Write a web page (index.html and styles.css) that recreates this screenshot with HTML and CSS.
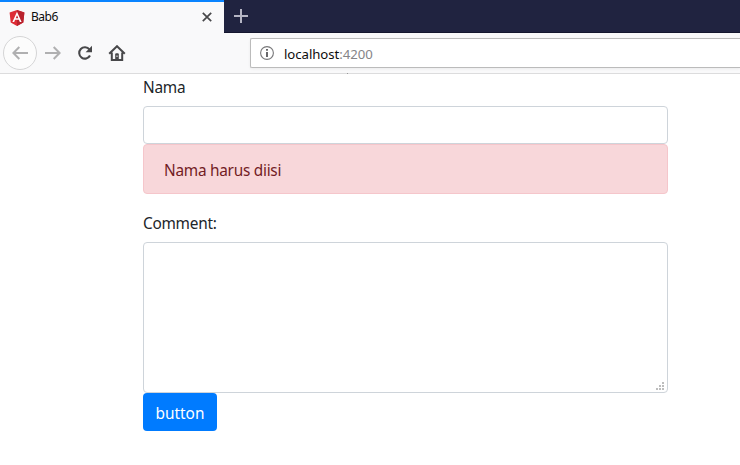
FILE: index.html
```html
<!DOCTYPE html>
<html lang="id">
<head>
<meta charset="utf-8">
<title>Bab6</title>
<link rel="stylesheet" href="styles.css">
</head>
<body>
<header class="browser">
  <div class="tabs">
    <div class="tab">
      <svg class="logo" width="16" height="16" viewBox="0 0 16 16"><path fill="#dd2c35" d="M8 0 15.4 2.6 14.3 12.4 8 16 1.7 12.4.6 2.6z"/><path fill="#b9222d" d="M8 0 15.4 2.6 14.3 12.4 8 16z"/><path fill="#fff" fill-rule="evenodd" d="M8 1.8 3.4 12h1.8l.9-2.3h3.8l.9 2.3h1.8zm0 3.4 1.3 3H6.7z"/></svg>
      <span class="tab-title">Bab6</span>
      <svg class="close" width="10" height="10" viewBox="0 0 10 10"><path d="M.8.8l8.4 8.4M9.2.8.8 9.2" stroke="#48484a" stroke-width="1.7"/></svg>
    </div>
    <svg class="plus" width="14" height="14" viewBox="0 0 14 14"><path d="M7 0v14M0 7h14" stroke="#b5b5c4" stroke-width="2"/></svg>
  </div>
  <div class="toolbar">
    <span class="back"><svg width="16" height="14" viewBox="0 0 16 14"><path d="M7.3 1 1.4 7l5.9 6M1.5 7H16" fill="none" stroke="#b0b0b1" stroke-width="2"/></svg></span>
    <svg class="forward" width="16" height="14" viewBox="0 0 16 14"><path d="M8.7 1l5.9 6-5.9 6M0 7h14.5" fill="none" stroke="#b0b0b1" stroke-width="2"/></svg>
    <svg class="reload" width="16" height="16" viewBox="0 0 16 16"><path d="M12.4 4.4A5.7 5.7 0 1 0 13 10.5" fill="none" stroke="#48484a" stroke-width="2.1"/><path d="M15 .8V7.3H8.6z" fill="#48484a"/></svg>
    <svg class="home" width="18" height="16" viewBox="0 0 18 16"><path d="M1.2 8.7 9 1.2l7.8 7.5M3.8 7.5V15h10.4V7.5" fill="none" stroke="#48484a" stroke-width="2"/><path d="M7.2 15V9.2q0-1 1-1h1.6q1 0 1 1V15z" fill="#48484a"/><path d="M9 10.5v1.5" stroke="#f9f9fa" stroke-width="1"/></svg>
    <div class="address">
      <svg width="14" height="14" viewBox="0 0 14 14"><circle cx="7" cy="7" r="6.4" fill="none" stroke="#78787a" stroke-width="1.1"/><path d="M7 3v1.8M7 6v5" stroke="#58585b" stroke-width="1.8"/></svg>
      <span class="url">localhost<span class="port">:4200</span></span>
    </div>
  </div>
</header>
<main class="container">
  <label class="label" for="nama">Nama</label>
  <input class="control" id="nama" type="text">
  <div class="alert"><span class="alert-text">Nama harus diisi</span></div>
  <label class="label" for="comment">Comment:</label>
  <div class="area">
    <textarea class="control comment" id="comment"></textarea>
    <svg class="grip" width="8" height="8" viewBox="0 0 8 8"><path fill="#bdbdbd" d="M6 0h2v2H6zM3 3h2v2H3zM6 3h2v2H6zM0 6h2v2H0zM3 6h2v2H3zM6 6h2v2H6z"/></svg>
  </div>
  <button class="btn" type="button">button</button>
</main>
</body>
</html>
```
FILE: styles.css
```css
* { box-sizing: border-box; }
body {
  margin: 0;
  height: 465px;
  overflow: hidden;
  background: #fff;
  color: #212529;
  font: 15.4px/24px "Noto Sans", "Open Sans", sans-serif;
  letter-spacing: -.27px;
}
svg { display: block; flex: none; }
.browser { position: relative; height: 74px; background: #f9f9fa; border-bottom: 1px solid #dcdcdd; }
.browser::after {
  content: "";
  position: absolute;
  left: 347px;
  bottom: -1px;
  width: 1px;
  height: 1px;
  background: #999;
}
.tabs { display: flex; height: 33px; background: #202340; box-shadow: inset 0 -1px #14162e; }
.tab {
  display: flex;
  align-items: center;
  width: 224px;
  padding: 0 12px 0 9px;
  background: #f9f9fa;
  border-top: 2px solid #0a84ff;
}
.close { margin-top: -1px; }
.tab-title {
  flex: 1;
  margin: -1px 0 0 6px;
  color: #0c0c0d;
  font-size: 12px;
  line-height: 16px;
  letter-spacing: -.5px;
}
.plus { margin: 9px 0 0 10px; }
.toolbar { display: flex; align-items: center; height: 40px; padding-left: 3px; }
.back {
  display: grid;
  place-items: center;
  width: 34px;
  height: 34px;
  border: 1px solid #d5d5d6;
  border-radius: 50%;
  background: #fcfcfc;
}
.forward { margin-left: 8px; }
.reload { margin-left: 16px; }
.home { margin-left: 15px; }
.address {
  display: flex;
  align-items: center;
  flex: 1;
  height: 30px;
  margin-left: 124px;
  padding-left: 9px;
  background: #fff;
  border: 1px solid #bbb;
  border-right: 0;
  border-radius: 2px 0 0 2px;
  box-shadow: 0 1px 3px rgba(0, 0, 0, .06);
}
.url { margin: 1px 0 0 10px; color: #0c0c0d; font-size: 13.2px; line-height: 20px; letter-spacing: -.05px; }
.port { color: #858587; }
.container { display: flex; flex-direction: column; width: 525px; margin: 2px 0 0 143px; }
.label { margin-bottom: 6px; }
.control {
  display: block;
  width: 100%;
  height: 38px;
  margin: 0;
  padding: 6px 12px;
  border: 1px solid #ced4da;
  border-radius: 4px;
  background: #fff;
  font: inherit;
  resize: none;
}
.alert {
  height: 50px;
  margin-bottom: 18px;
  padding: 14px 20px 10px;
  border: 1px solid #f5c6cb;
  border-radius: 4px;
  background: #f8d7da;
  color: #721c24;
}
.area { position: relative; }
.comment { height: 151px; }
.grip { position: absolute; right: 4px; bottom: 3px; }
.btn {
  align-self: flex-start;
  width: 74px;
  height: 38px;
  padding: 3px 0 0;
  border: 0;
  border-radius: 4px;
  background: #007bff;
  color: #fff;
  font: inherit;
}
```
